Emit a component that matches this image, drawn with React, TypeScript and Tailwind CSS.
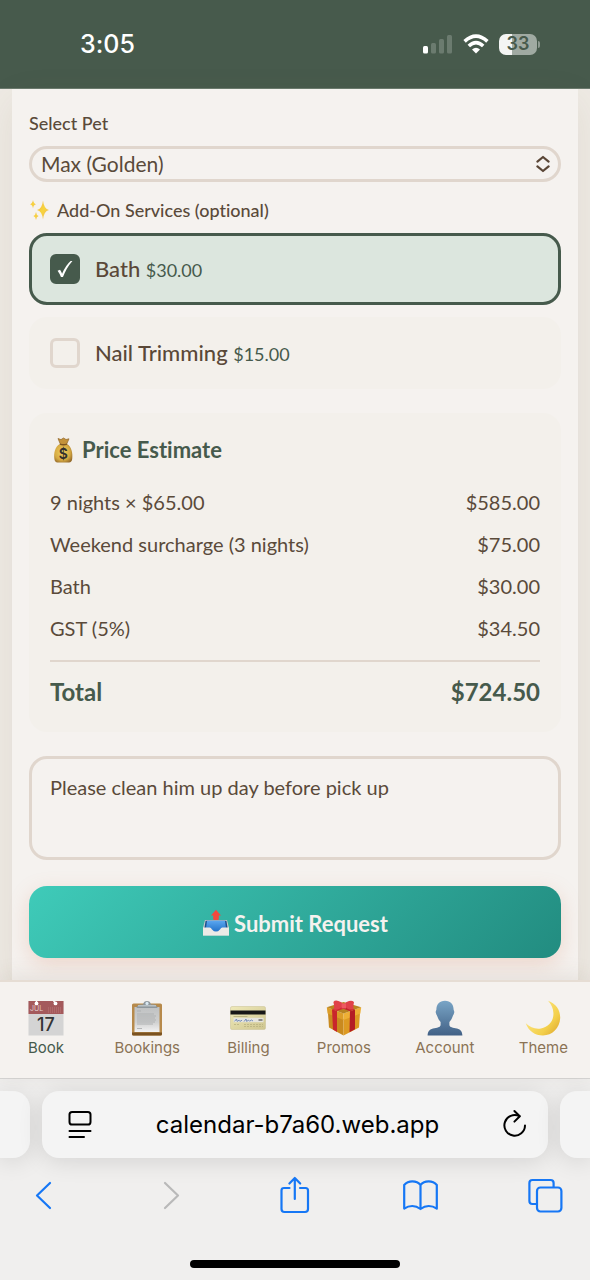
import { useState } from "react";
import type { ReactNode } from "react";
import { clsx } from "clsx";

const PETS = ["Max (Golden)"];

const ADD_ONS = [
  { id: "bath", label: "Bath", price: "$30.00" },
  { id: "nails", label: "Nail Trimming", price: "$15.00" },
];

const PRICE_ROWS = [
  { label: "9 nights × $65.00", amount: "$585.00" },
  { label: "Weekend surcharge (3 nights)", amount: "$75.00" },
  { label: "Bath", amount: "$30.00" },
  { label: "GST (5%)", amount: "$34.50" },
];

const NAV = [
  { label: "Book", icon: CalendarIcon },
  { label: "Bookings", icon: ClipboardIcon },
  { label: "Billing", icon: CardIcon },
  { label: "Promos", icon: GiftIcon },
  { label: "Account", icon: PersonIcon },
  { label: "Theme", icon: MoonIcon },
];

/* ---------- Emoji-style icons ---------- */

function SparklesIcon() {
  return (
    <svg viewBox="0 0 22 22" className="h-[22px] w-[22px] shrink-0" aria-hidden="true">
      <defs>
        <linearGradient id="spark" x1="0" y1="0" x2="1" y2="1">
          <stop offset="0" stopColor="#f2b04e" />
          <stop offset="0.5" stopColor="#f7d53c" />
          <stop offset="1" stopColor="#efae62" />
        </linearGradient>
      </defs>
      <g fill="url(#spark)">
        <path d="M14 1.5 Q14.8 9.6 20 11 Q14.8 12.4 14 20.5 Q13.2 12.4 8 11 Q13.2 9.6 14 1.5Z" />
        <path d="M4 1 Q4.5 4.6 7 5.2 Q4.5 5.8 4 9.4 Q3.5 5.8 1 5.2 Q3.5 4.6 4 1Z" />
        <path d="M7 13 Q7.4 16.4 9.6 17 Q7.4 17.6 7 21 Q6.6 17.6 4.4 17 Q6.6 16.4 7 13Z" />
      </g>
    </svg>
  );
}

function MoneyBagIcon() {
  return (
    <svg viewBox="0 0 26 28" className="h-7 w-[26px] shrink-0" aria-hidden="true">
      <defs>
        <radialGradient id="bag" cx="0.45" cy="0.45" r="0.65">
          <stop offset="0" stopColor="#f0d060" />
          <stop offset="0.65" stopColor="#d6aa42" />
          <stop offset="1" stopColor="#94692a" />
        </radialGradient>
      </defs>
      <path d="M8 2.5 L11 3.6 L13.5 2 L16 3.5 L19 2.8 L16.5 8.5 H10.5Z" fill="#c3923a" stroke="#8f6426" strokeWidth="0.7" />
      <path d="M10 8 C5 10.5 3.6 17 4.4 23 Q4.8 26.4 7.5 26.5 H19 Q21.8 26.4 22.2 23 C23 17 21.4 10.5 17 8Z" fill="url(#bag)" />
      <path d="M10 8.2 Q13.4 9.4 17 8.2" fill="none" stroke="#7c5521" strokeWidth="1.4" />
      <text x="13.4" y="23.2" textAnchor="middle" fontSize="14" fontWeight="600" fill="#33302c" fontFamily="Inter, sans-serif">$</text>
    </svg>
  );
}

function OutboxIcon() {
  return (
    <svg viewBox="0 0 28 28" className="h-7 w-7 shrink-0" aria-hidden="true">
      <defs>
        <linearGradient id="tray" x1="0" y1="0" x2="0" y2="1">
          <stop offset="0" stopColor="#5aa6f0" />
          <stop offset="1" stopColor="#1f6fc6" />
        </linearGradient>
      </defs>
      <path d="M3 11 H25 L27 19 V26.4 H1 V19Z" fill="#c9cbcb" />
      <path d="M3.6 11.8 H24.4 L25.6 19 H2.4Z" fill="#1c4f8c" />
      <path d="M5 11.8 H23 L24 19 Q20 19.2 18.4 21.4 Q14 25.6 9.6 21.4 Q8 19.2 4 19Z" fill="url(#tray)" />
      <path d="M1 18.6 H7.6 Q9 18.8 10 20.4 Q14 24.8 18 20.4 Q19 18.8 20.4 18.6 H27 V26.6 H1Z" fill="#eceae6" />
      <path d="M14 0.8 L19 6.6 H16.8 V10.6 Q14 11.6 11.2 10.6 V6.6 H9Z" fill="#f2493d" />
    </svg>
  );
}

function CalendarIcon() {
  return (
    <svg viewBox="0 0 36 36" className="h-9 w-9" aria-hidden="true">
      <rect x="0.5" y="1" width="35" height="34.5" fill="#d4d4d4" />
      <rect x="0.5" y="1" width="35" height="13" fill="#a4595b" />
      <path d="M20 8h13M20 10h13M20 12h13" stroke="#b97879" strokeWidth="1" strokeDasharray="1 1" />
      <circle cx="8.5" cy="3.4" r="1.9" fill="#fff" />
      <circle cx="27.5" cy="3.4" r="1.9" fill="#fff" />
      <path d="M8.5 1v2M25.5 1l2 2" stroke="#fff" strokeWidth="1.4" />
      <text x="2" y="10.8" fontSize="7" fill="#e3cccc" fontFamily="Inter, sans-serif">JUL</text>
      <text x="18" y="31" textAnchor="middle" fontSize="18" fontWeight="500" fill="#343434" fontFamily="Inter, sans-serif">17</text>
    </svg>
  );
}

function ClipboardIcon() {
  return (
    <svg viewBox="0 0 36 36" className="h-9 w-9" aria-hidden="true">
      <defs>
        <linearGradient id="paper" x1="0" y1="0" x2="0" y2="1">
          <stop offset="0" stopColor="#bfc1c2" />
          <stop offset="0.6" stopColor="#cfd0d0" />
          <stop offset="1" stopColor="#f3f3f3" />
        </linearGradient>
      </defs>
      <rect x="3" y="3.5" width="30" height="32" rx="1.6" fill="#b78a4b" />
      <path d="M3 32.5h30v1.4q0 1.6-1.6 1.6H4.6q-1.6 0-1.6-1.6z" fill="#7a5220" />
      <path d="M5.5 7 H30.5 V32 H5.5Z" fill="url(#paper)" />
      <path d="M8 11h4M8 14h17M8 16h19M8 18h18M8 20h19M8 22h18M8 24h16M8 28.5h5" stroke="#adafb0" strokeWidth="0.9" />
      <path d="M7.5 8 Q8 4.4 12 4.4 H14 Q14.8 1 18 1 T22 4.4 H24 Q28 4.4 28.5 8Z" fill="#8e979d" />
      <path d="M9 5.8 H27" stroke="#c5ccd0" strokeWidth="1.2" />
      <circle cx="18" cy="3.4" r="1.6" fill="#d9e8f2" />
    </svg>
  );
}

function CardIcon() {
  return (
    <svg viewBox="0 0 36 36" className="h-9 w-9" aria-hidden="true">
      <defs>
        <linearGradient id="card" x1="0" y1="0" x2="1" y2="1">
          <stop offset="0" stopColor="#efe9b8" />
          <stop offset="1" stopColor="#cfc690" />
        </linearGradient>
      </defs>
      <rect x="0.5" y="6.5" width="35" height="23" rx="1.6" fill="url(#card)" stroke="#c9c190" strokeWidth="0.5" />
      <rect x="0.5" y="10.5" width="35" height="4" fill="#171717" />
      <path d="M3.5 16.5h14" stroke="#aaa373" strokeWidth="0.7" />
      <rect x="3.5" y="17.8" width="30" height="4.4" fill="#e6e5df" />
      <path d="M4.5 21.4l2-2.4.6 2.4 2-1.2.8 1.2 2.2-1.2M14 21.6l2-2.6.6 2.4 2-1.2 1 1 1.8-1.2 1.6 1" fill="none" stroke="#6b84b4" strokeWidth="0.9" />
      <path d="M28.5 20h4" stroke="#333" strokeWidth="1" />
      <path d="M4 24.5h6M14 24.5h19M14 26.5h19" stroke="#b5ad7c" strokeWidth="0.7" strokeDasharray="2 1" />
    </svg>
  );
}

function GiftIcon() {
  return (
    <svg viewBox="0 0 36 36" className="h-9 w-9" aria-hidden="true">
      <path d="M2 13 L17.5 19 V35.5 L3 27.5Z" fill="#c98a1f" />
      <path d="M34 13 L17.5 19 V35.5 L33 27.5Z" fill="#dd9a22" />
      <path d="M0.8 7.2 L17.5 13.5 V20 L1.6 13.6Z" fill="#dc9d28" />
      <path d="M35.2 7.2 L17.5 13.5 V20 L34.4 13.6Z" fill="#eeb035" />
      <path d="M0.8 7.2 L17.5 2 L35.2 7.2 L17.5 13.5Z" fill="#b98420" />
      <path d="M6 9.2 L11 11 V32 L7 29.5Z" fill="#c9262c" />
      <path d="M24 11.2 L29 9.4 V29.3 L23.5 32.3Z" fill="#b41e25" />
      <path d="M6 9.2 L22 4 L27 5.4 L11 11Z" fill="#d02a31" />
      <path d="M29 9.4 L13 4 L9 5.4 L24 11.2Z" fill="#c3242b" />
      <path d="M17 6 Q13 10.5 7.8 9.6 Q8.6 6.8 7.4 2 Q9 -0.2 12.4 1 Q16 2.2 17 4Z" fill="#e04249" />
      <path d="M18.5 6 Q22 10.5 27.6 9.4 Q26.8 6.4 28 2 Q26 0 23 1 Q19.4 2.2 18.5 4Z" fill="#e04249" />
      <path d="M15.6 3.4h4.4v5h-4.4z" fill="#ee5a60" />
    </svg>
  );
}

function PersonIcon() {
  return (
    <svg viewBox="0 0 36 36" className="h-9 w-9" aria-hidden="true">
      <defs>
        <linearGradient id="person" x1="0" y1="0" x2="0" y2="1">
          <stop offset="0" stopColor="#79a5c6" />
          <stop offset="1" stopColor="#426186" />
        </linearGradient>
      </defs>
      <path
        d="M18 0.8 C23.6 0.8 26.6 4.4 26.6 9.6 C26.6 10.6 27.6 11 27.2 12.8 C26.8 14.6 26.2 15 25.8 16 C25 18.6 23.8 20.6 22.4 22 V25 C22.6 27.4 26 27.8 30 28.4 C34 29.2 35.2 32 35.4 35.4 H0.6 C0.8 32 2 29.2 6 28.4 C10 27.8 13.4 27.4 13.6 25 V22 C12.2 20.6 11 18.6 10.2 16 C9.8 15 9.2 14.6 8.8 12.8 C8.4 11 9.4 10.6 9.4 9.6 C9.4 4.4 12.4 0.8 18 0.8Z"
        fill="url(#person)"
      />
    </svg>
  );
}

function MoonIcon() {
  return (
    <svg viewBox="0 0 36 36" className="h-9 w-9" aria-hidden="true">
      <defs>
        <linearGradient id="moon" x1="0.2" y1="0.4" x2="0.9" y2="1">
          <stop offset="0" stopColor="#fbe277" />
          <stop offset="0.6" stopColor="#f3cf4a" />
          <stop offset="1" stopColor="#dfa92f" />
        </linearGradient>
      </defs>
      <path d="M23 0.8 C31 3.4 35.4 10.4 35.2 18 C34.8 28.4 27 35.4 18 35.4 C10 35.4 3.4 31 0.8 23.2 C5 27.4 10.4 29.4 16 28.4 C24 27 28.8 20.6 28.4 13 C28.2 8.4 26.4 4.2 23 0.8Z" fill="url(#moon)" />
    </svg>
  );
}

/* ---------- System chrome ---------- */

function StatusBar() {
  return (
    <header className="flex h-[89px] items-center justify-between border-b border-[#6b7a6e] bg-[#475a4c] pr-[50px] pl-20 font-[Inter,sans-serif] text-white">
      <span className="text-[25px] leading-8 font-medium">3:05</span>
      <div className="flex items-center gap-2.5">
        <svg viewBox="0 0 31 20" className="h-5 w-[31px]" fill="#fff" aria-label="Signal strength">
          <rect x="1" y="12" width="5" height="7.5" rx="1.5" />
          <rect x="9" y="9" width="5" height="10.5" rx="1.5" opacity="0.2" />
          <rect x="17" y="5" width="5" height="14.5" rx="1.5" opacity="0.2" />
          <rect x="25" y="1" width="5" height="18.5" rx="1.5" opacity="0.2" />
        </svg>
        <svg viewBox="0 0 26 20" className="h-5 w-[26px]" fill="none" stroke="#fff" strokeWidth="3.6" aria-label="Wi-Fi">
          <path d="M1.6 7.4 Q13 -3 24.4 7.4" />
          <path d="M5.8 12 Q13 5.4 20.2 12" />
          <path d="M13 19.6 L9 15.6 Q13 12 17 15.6Z" fill="#fff" stroke="none" />
        </svg>
        <div className="flex items-center gap-px">
          <div className="grid h-[21px] w-[38px] place-items-center rounded-[7px] bg-linear-to-r from-[#f4f5f4] from-34% to-[#a0aaa2] to-34% text-[18px] leading-none font-semibold text-[#475a4c]">
            33
          </div>
          <span className="h-[7px] w-[2px] rounded-r-full bg-[#8d9990]" />
        </div>
      </div>
    </header>
  );
}

function ToolIcon({ label, muted, children }: { label: string; muted?: boolean; children: ReactNode }) {
  return (
    <button type="button" aria-label={label} className={muted ? "text-[#b9b9b9]" : "text-[#1677f5]"}>
      <svg
        viewBox="0 0 36 40"
        className="h-10 w-9"
        fill="none"
        stroke="currentColor"
        strokeWidth="2.2"
        strokeLinecap="round"
        strokeLinejoin="round"
      >
        {children}
      </svg>
    </button>
  );
}

function BrowserBar() {
  return (
    <footer className="overflow-hidden border-t border-[#d6d5d4] bg-[#f0efee] pt-3 pb-3">
      <div className="flex h-[67px] gap-3">
        <div className="w-[30px] rounded-r-[17px] bg-[#f4f4f4] shadow-[0_3px_24px_rgba(0,0,0,0.12)]" />
        <div className="flex flex-1 items-center justify-between rounded-[17px] bg-[#f4f4f4] pr-[17px] pl-[22px] text-black shadow-[0_3px_24px_rgba(0,0,0,0.12)]">
          <button type="button" aria-label="Page settings">
            <svg viewBox="0 0 32 32" className="h-8 w-8" fill="none" stroke="currentColor" strokeWidth="2" strokeLinecap="round">
              <rect x="5.5" y="3" width="21" height="12.5" rx="2.6" />
              <path d="M5.5 22h21M5.5 28h14.5" />
            </svg>
          </button>
          <span className="font-[Inter,sans-serif] text-2xl leading-8">calendar-b7a60.web.app</span>
          <button type="button" aria-label="Reload">
            <svg viewBox="0 0 32 32" className="h-8 w-8" fill="none" stroke="currentColor" strokeWidth="2" strokeLinecap="round" strokeLinejoin="round">
              <path d="M26 16.5 A10.3 10.3 0 1 1 20.4 7.2" />
              <path d="M15.4 2 L20.8 7.2 L15.4 12.6" />
            </svg>
          </button>
        </div>
        <div className="w-[30px] rounded-l-[17px] bg-[#f4f4f4] shadow-[0_3px_24px_rgba(0,0,0,0.12)]" />
      </div>

      <div className="mt-[17px] flex items-center justify-between px-[26px]">
        <ToolIcon label="Back">
          <path d="M24 8 L11 20.5 L24 33" />
        </ToolIcon>
        <ToolIcon label="Forward" muted>
          <path d="M13 8 L26 20.5 L13 33" />
        </ToolIcon>
        <ToolIcon label="Share">
          <path d="M12.5 13 H7 Q4.5 13 4.5 15.5 V34 Q4.5 37 7.5 37 H28 Q31 37 31 34 V15.5 Q31 13 28.5 13 H23" />
          <path d="M17.8 24 V3 M12.4 8.5 L17.8 3 L23.2 8.5" />
        </ToolIcon>
        <ToolIcon label="Bookmarks">
          <path d="M17.5 10 Q14.6 6.4 9.3 6.4 Q4.4 6.4 1.2 10 V33.6 Q5 31 9.3 31 Q13.6 31 17.5 34 Q21.4 31 25.7 31 Q30 31 33.8 33.6 V10 Q30.6 6.4 25.7 6.4 Q20.4 6.4 17.5 10 V34" />
        </ToolIcon>
        <ToolIcon label="Tabs">
          <path d="M9 29 H4.4 Q1.4 29 1.4 26 V8 Q1.4 5 4.4 5 H22.6 Q25.6 5 25.6 8 V12" />
          <rect x="9" y="12.5" width="24.4" height="24" rx="3.4" />
        </ToolIcon>
      </div>

      <div className="mx-auto mt-[45px] h-2 w-[210px] rounded-full bg-black" />
    </footer>
  );
}

/* ---------- Booking form ---------- */

type AddOn = (typeof ADD_ONS)[number];

function AddOnOption({ addOn, checked, onToggle }: { addOn: AddOn; checked: boolean; onToggle: () => void }) {
  return (
    <label
      className={clsx(
        "flex h-[72px] items-center gap-[15px] rounded-[18px] border-[3px] px-[18px]",
        checked ? "border-[#465a4c] bg-[#dce6de]" : "border-[#f3f0eb] bg-[#f3f0eb]",
      )}
    >
      <span className="grid h-[30px] w-[30px] place-items-center">
        <input
          type="checkbox"
          checked={checked}
          onChange={onToggle}
          className="col-start-1 row-start-1 h-[30px] w-[30px] appearance-none rounded-[6px] border-[3px] border-[#e0d6cd] checked:border-[#465a4c] checked:bg-[#465a4c]"
        />
        {checked && (
          <svg viewBox="0 0 16 16" className="pointer-events-none z-10 col-start-1 row-start-1 h-[18px] w-[18px]" fill="#fff" aria-hidden="true">
            <path d="M1.4 9.6 L3.6 8.6 Q4.8 10.4 5.4 12.2 Q8.4 4.8 13 0.8 H14.6 Q9.2 7 6.2 15.2 H4.4 Q3.2 12 1.4 9.6Z" />
          </svg>
        )}
      </span>
      <span className="text-[22px] leading-7 font-medium text-[#5a4838]">
        {addOn.label} <span className="text-lg font-normal text-[#465a4c]">{addOn.price}</span>
      </span>
    </label>
  );
}

function PriceEstimate() {
  return (
    <section className="mt-6 rounded-[18px] bg-[#f3f0eb] p-[21px]">
      <h2 className="mb-[15px] flex items-center gap-1.5 text-[22px] leading-8 font-bold text-[#465a4c]">
        <MoneyBagIcon />
        Price Estimate
      </h2>
      <dl>
        {PRICE_ROWS.map((row) => (
          <div key={row.label} className="flex items-center justify-between text-xl leading-[42px]">
            <dt>{row.label}</dt>
            <dd>{row.amount}</dd>
          </div>
        ))}
        <div className="mt-[11px] flex items-center justify-between border-t-2 border-[#e0d6cd] pt-[11px] text-2xl leading-[38px] font-bold text-[#465a4c]">
          <dt>Total</dt>
          <dd>{"$724.50"}</dd>
        </div>
      </dl>
    </section>
  );
}

export default function App() {
  const [selected, setSelected] = useState<string[]>(["bath"]);
  const [notes, setNotes] = useState("Please clean him up day before pick up");
  const [tab, setTab] = useState("Book");

  const toggle = (id: string) =>
    setSelected((prev) => (prev.includes(id) ? prev.filter((s) => s !== id) : [...prev, id]));

  return (
    <div className="flex min-h-screen flex-col bg-[#eeeae4] font-[Lato,sans-serif] text-[#5a4a3a] [font-variant-ligatures:none]">
      <StatusBar />

      <main className="flex-1 px-3">
        <form
          onSubmit={(e) => e.preventDefault()}
          className="flex h-full flex-col bg-[#f5f2ef] px-[17px] pt-[22px] pb-[22px] shadow-[0_12px_36px_rgba(110,90,60,0.09)]"
        >
          <label htmlFor="pet" className="text-lg leading-6 font-medium">
            Select Pet
          </label>
          <div className="mt-[11px] grid items-center">
            <select
              id="pet"
              className="col-start-1 row-start-1 h-9 appearance-none rounded-full border-[3px] border-[#e0d6cd] bg-transparent pr-8 pl-[9px] text-[21px] leading-7"
            >
              {PETS.map((pet) => (
                <option key={pet}>{pet}</option>
              ))}
            </select>
            <svg
              viewBox="0 0 14 18"
              className="pointer-events-none col-start-1 row-start-1 mr-[11px] h-[18px] w-3.5 justify-self-end"
              fill="none"
              stroke="#5a4636"
              strokeWidth="2.2"
              strokeLinecap="round"
              strokeLinejoin="round"
              aria-hidden="true"
            >
              <path d="M1.4 6.6 L7 2 L12.6 6.6M1.4 11.4 L7 16 L12.6 11.4" />
            </svg>
          </div>

          <fieldset>
            <legend className="flex items-center gap-1.5 pt-4 pb-[11px] text-lg leading-6 font-medium">
              <SparklesIcon />
              Add-On Services (optional)
            </legend>
            <div className="flex flex-col gap-3">
              {ADD_ONS.map((addOn) => (
                <AddOnOption
                  key={addOn.id}
                  addOn={addOn}
                  checked={selected.includes(addOn.id)}
                  onToggle={() => toggle(addOn.id)}
                />
              ))}
            </div>
          </fieldset>

          <PriceEstimate />

          <textarea
            aria-label="Notes"
            value={notes}
            onChange={(e) => setNotes(e.target.value)}
            className="mt-6 h-[104px] resize-none rounded-[18px] border-[3px] border-[#e0d6cd] bg-transparent px-[18px] py-[14px] text-xl leading-7"
          />

          <button
            type="submit"
            className="mt-[26px] flex h-[72px] items-center justify-center gap-1 rounded-[18px] bg-linear-135 from-[#3fcbb9] to-[#228c80] pt-0.5 text-[22px] font-bold text-[#f5f2ef] shadow-[0_6px_20px_rgba(220,130,100,0.25)]"
          >
            <OutboxIcon />
            Submit Request
          </button>
        </form>
      </main>

      <nav className="relative z-10 flex h-[98px] items-start justify-between border-t-2 border-[#e6ddd4] bg-[#f5f2ef] px-[22px] pt-[18px] font-[Inter,sans-serif] shadow-[0_-4px_20px_rgba(90,70,50,0.1)]">
        {NAV.map(({ label, icon: Icon }) => (
          <button
            key={label}
            type="button"
            onClick={() => setTab(label)}
            className={clsx(
              "flex min-w-12 flex-col items-center gap-0.5 text-[15px] leading-5",
              tab === label ? "text-[#465a4c]" : "text-[#8b7355]",
            )}
          >
            <Icon />
            {label}
          </button>
        ))}
      </nav>

      <BrowserBar />
    </div>
  );
}
